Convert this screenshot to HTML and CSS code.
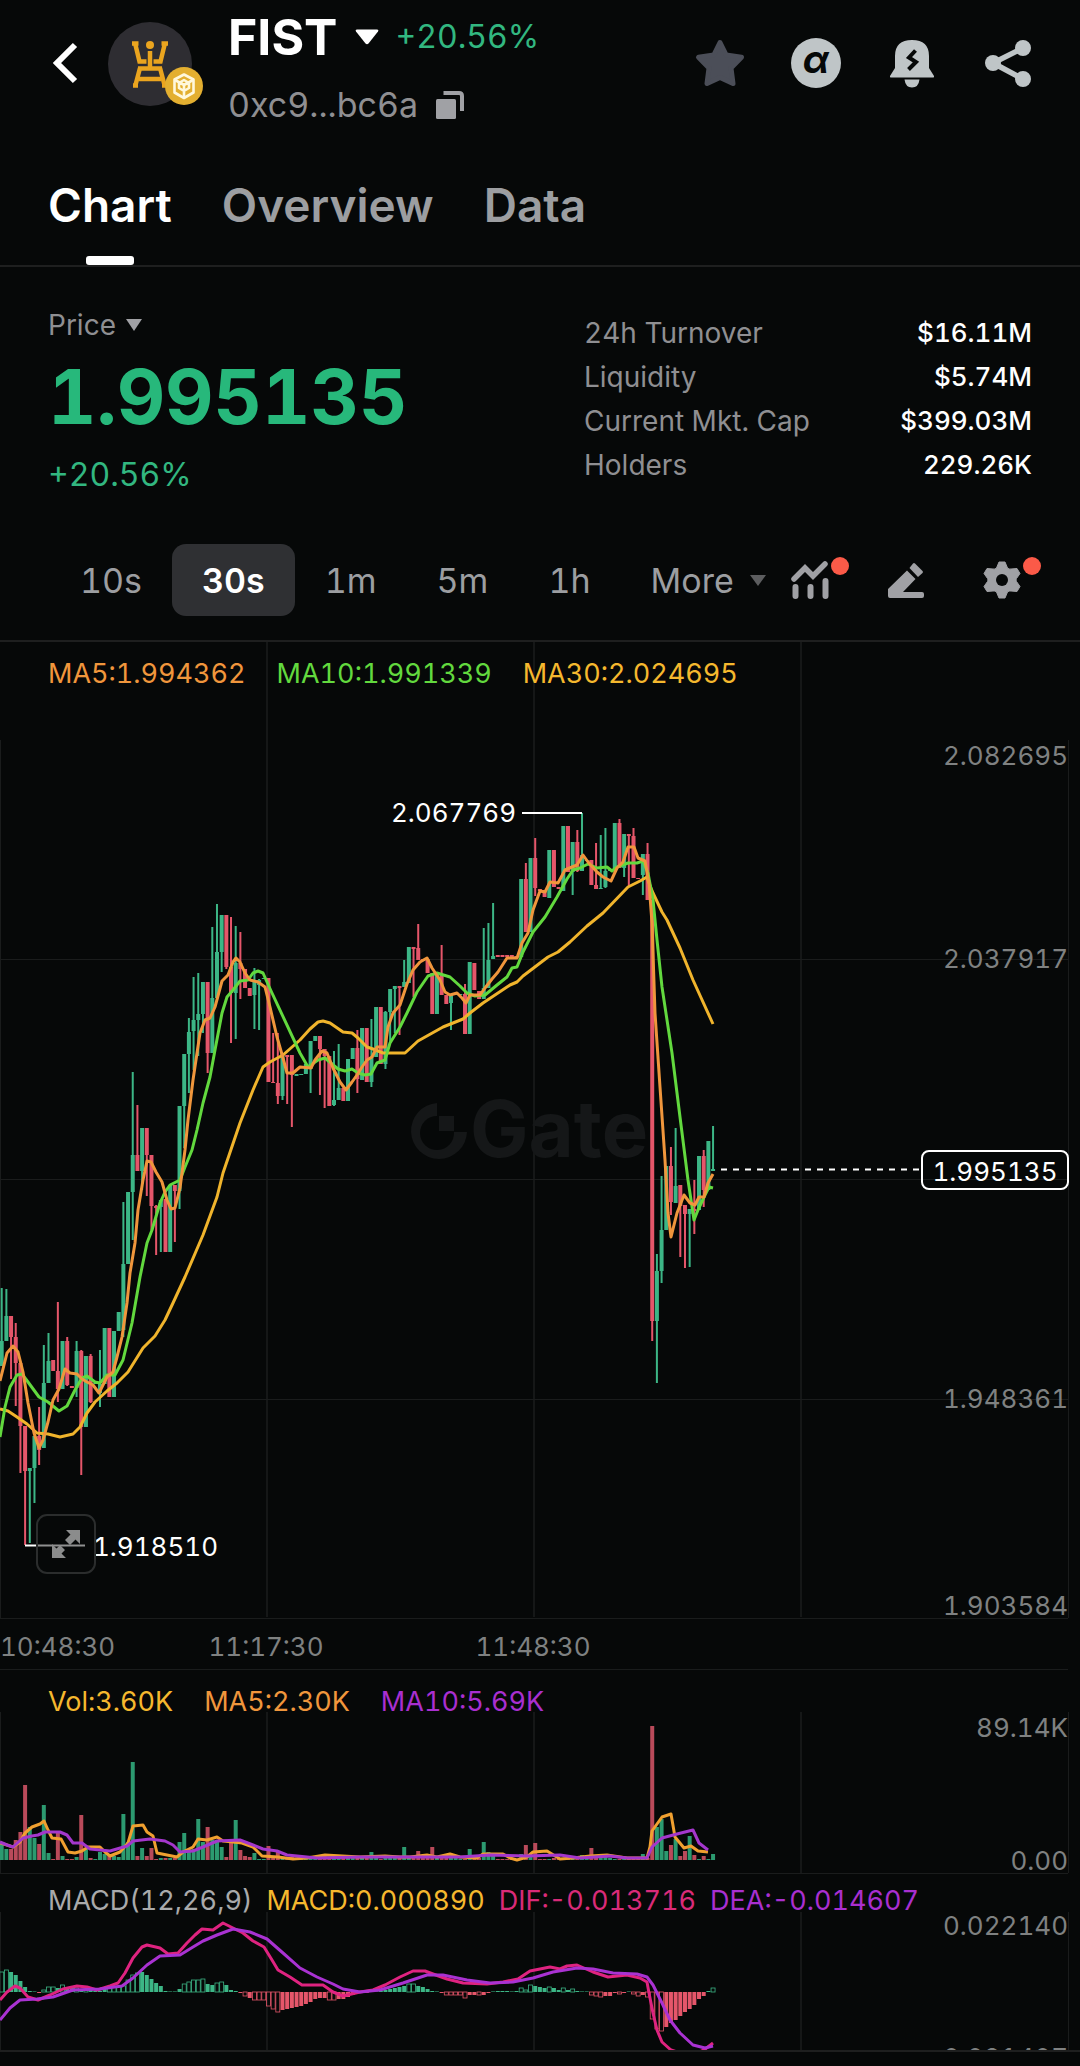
FILE: index.html
```html
<!DOCTYPE html>
<html lang="en">
<head>
    <meta charset="UTF-8">
    <meta name="viewport" content="width=device-width, initial-scale=1.0">
    <title>FIST Chart</title>
    <link rel="stylesheet" href="styles.css">
</head>
<body>
    <header class="header">
        <button class="icon-btn back" type="button" aria-label="Back">
            <svg width="30" height="42" viewBox="0 0 30 42"><path d="M27 3 L9 21 L27 39" fill="none" stroke="#fff" stroke-width="6"/></svg>
        </button>
        <div class="avatar">
            <svg width="84" height="84" viewBox="0 0 84 84">
                <circle cx="42" cy="42" r="42" fill="#2e2d32"/>
                <g fill="none" stroke="#eba51f" stroke-width="4.500">
                    <path d="M24 21.500h6.500M60 21.500h-6.500"/>
                    <path d="M27 21l4.500 18.500h7M57 21l-4.500 18.500h-7"/>
                    <path d="M42 29v18"/>
                    <path d="M30 46.500h24M32 46l-4.500 17M52 46l4.500 17M31 57h22M25 63.500h5M54 63.500h5"/>
                </g>
                <circle cx="42" cy="23" r="4" fill="#eba51f"/>
            </svg>
            <svg class="chain" width="38" height="38" viewBox="0 0 38 38">
                <circle cx="19" cy="19" r="19" fill="#e3af30"/>
                <g fill="none" stroke="#fff8dc" stroke-width="2.600" stroke-linejoin="round">
                    <path d="M9.500 12.500L19 7.500l9.500 5v13L19 31l-9.500-5.500z"/>
                    <path d="M10 13l9 5 9-5M14 21v-5l5-3 5 3v5l-5 3zM19 18v12"/>
                </g>
            </svg>
        </div>
        <div class="title">
            <div class="title-row">
                <h1>FIST</h1>
                <svg width="24" height="16" viewBox="0 0 24 16"><path d="M2 0.500h20q2 0 1 2L13.500 14.500q-1.500 1.500-3 0L1 2.500Q0 0.500 2 0.500z" fill="#fff"/></svg>
                <span class="change">+20.56%</span>
            </div>
            <div class="address-row">
                <span>0xc9...bc6a</span>
                <button class="icon-btn" type="button" aria-label="Copy address">
                    <svg width="28" height="28" viewBox="0 0 28 28"><rect x="0" y="8" width="20" height="20" rx="1.500" fill="#a0a1a5"/><path d="M7.500 2H23q3 0 3 3v15" fill="none" stroke="#a0a1a5" stroke-width="4"/></svg>
                </button>
            </div>
        </div>
        <div class="actions">
            <button class="icon-btn" type="button" aria-label="Favorite">
                <svg width="48" height="48" viewBox="0 0 48 48"><path d="M24 3.500l6.200 12.500 15.300 2.200-10.500 10.800 2 15.500L24 38.500 11 44.500l2-15.500L2.500 18.200 17.800 16z" fill="#4b4e58" stroke="#4b4e58" stroke-width="5" stroke-linejoin="round"/></svg>
            </button>
            <button class="icon-btn" type="button" aria-label="Alpha">
                <svg width="48" height="48" viewBox="0 0 48 48"><circle cx="24" cy="24" r="25" fill="#bfc5c7"/><text class="alpha" x="24" y="34" text-anchor="middle">α</text></svg>
            </button>
            <button class="icon-btn" type="button" aria-label="Price alert">
                <svg width="48" height="48" viewBox="0 0 48 48">
                    <path d="M7 17Q7 1 24 1t17 16v12l5 8q.5 1.500-1 1.500H3q-1.500 0-1-1.500l5-8zM16.500 40.500h15q-1 8-7.500 8t-7.500-8z" fill="#bfc5c7"/>
                    <path d="M27.500 11.500L21 18.500l7 4.500-7.500 7.500" fill="none" stroke="#060808" stroke-width="4"/>
                </svg>
            </button>
            <button class="icon-btn" type="button" aria-label="Share">
                <svg width="48" height="48" viewBox="0 0 48 48"><path d="M39 9L9 24l30 16" fill="none" stroke="#bfc5c7" stroke-width="5.500"/><g fill="#bfc5c7"><circle cx="39" cy="9" r="8"/><circle cx="9" cy="24" r="8"/><circle cx="39" cy="40" r="8"/></g></svg>
            </button>
        </div>
    </header>

    <nav class="tabs">
        <a class="active" href="#chart">Chart</a>
        <a href="#overview">Overview</a>
        <a href="#data">Data</a>
    </nav>

    <section class="summary">
        <div class="price">
            <button class="price-type" type="button">Price
                <svg width="16" height="12" viewBox="0 0 16 12"><path d="M0 0h16L8 12z" fill="#a0a1a5"/></svg>
            </button>
            <div class="price-value">1.995135</div>
            <div class="change">+20.56%</div>
        </div>
        <dl class="stats">
            <div><dt>24h Turnover</dt><dd>$16.11M</dd></div>
            <div><dt>Liquidity</dt><dd>$5.74M</dd></div>
            <div><dt>Current Mkt. Cap</dt><dd>$399.03M</dd></div>
            <div><dt>Holders</dt><dd>229.26K</dd></div>
        </dl>
    </section>

    <div class="toolbar">
        <div class="intervals">
            <button type="button">10s</button>
            <button class="active" type="button">30s</button>
            <button type="button">1m</button>
            <button type="button">5m</button>
            <button type="button">1h</button>
            <button class="more" type="button">More
                <svg width="16" height="11" viewBox="0 0 16 11"><path d="M0 0h16L8 11z" fill="#5c5d5f"/></svg>
            </button>
        </div>
        <div class="tools">
            <button class="icon-btn dot" type="button" aria-label="Indicators">
                <svg width="38" height="38" viewBox="0 0 38 38"><path d="M3 18L14 7l8 8L34 3" fill="none" stroke="#a0a1a5" stroke-width="5.500" stroke-linecap="round"/><path d="M4.500 26v9M19.500 26v9M34.500 20v15" stroke="#a0a1a5" stroke-width="6" stroke-linecap="round"/></svg>
            </button>
            <button class="icon-btn" type="button" aria-label="Draw">
                <svg width="38" height="38" viewBox="0 0 38 38"><g fill="#a0a1a5"><path d="M20 9.500l8.500 8.500L16 31h19q2 0 2 2v2q0 2-2 2H3q-2 0-2-2v-7z"/><path d="M22.500 7L26 2.500q1-1 2 0l7.500 7.500q1 1 0 2L31 16z"/></g></svg>
            </button>
            <button class="icon-btn dot" type="button" aria-label="Settings">
                <svg width="38" height="38" viewBox="0 0 38 38"><path d="M16 1h6l2.500 6q1.500 1.500 3.500 1l6-.5 3 5-3.500 5q-1 1.500 0 3l3.500 5-3 5-6-.5q-2-.5-3.500 1L22 37h-6l-2.500-6q-1.500-1.500-3.500-1l-6 .5-3-5 3.500-5q1-1.500 0-3L1 12.500l3-5 6 .5q2 .5 3.500-1z" fill="#a0a1a5" stroke="#a0a1a5" stroke-linejoin="round"/><circle cx="19" cy="19" r="6" fill="#060808"/></svg>
            </button>
        </div>
    </div>

    <main class="chart" id="chart">
        <div class="pane">
            <div class="legend wide">
                <span class="orange">MA5:1.994362</span>
                <span class="green">MA10:1.991339</span>
                <span class="yellow">MA30:2.024695</span>
            </div>
            <svg id="price-pane" viewBox="0 642 1080 1028">
                <path class="grid-bold" d="M267 642V1617M534 642V1617M801 642V1617"/>
                <path class="grid" d="M.5 740V1618M1068.500 740V1618M0 959.500H1068M0 1179.500H1068M0 1399.500H1068M0 1618.500H1068M0 1669.500H1068"/>
                <!-- watermark -->
                <g class="watermark">
                    <path d="M437 1103A28 28 0 1 0 467 1132H454A17 17 0 1 1 437 1116z"/>
                    <path d="M439 1116h15v15h-15z"/>
                    <text x="470" y="1157">Gate</text>
                </g>
                <g class="candles"></g>
                <g class="lines"></g>
                <g class="axis">
                    <text x="1068" y="765" text-anchor="end">2.082695</text>
                    <text x="1068" y="968" text-anchor="end">2.037917</text>
                    <text x="1068" y="1408" text-anchor="end">1.948361</text>
                    <text x="1068" y="1615" text-anchor="end">1.903584</text>
                    <text x="0" y="1656">10:48:30</text>
                    <text x="266" y="1656" text-anchor="middle">11:17:30</text>
                    <text x="533" y="1656" text-anchor="middle">11:48:30</text>
                </g>
                <!-- high / low marks -->
                <g class="marks">
                    <path d="M522 813H582M25 1545.500H85"/>
                    <path d="M721 1169.500H921" stroke-dasharray="6 6"/>
                    <rect x="922" y="1151" width="146" height="38" rx="7"/>
                    <text x="516" y="822" text-anchor="end">2.067769</text>
                    <text x="93" y="1556">1.918510</text>
                    <text x="995" y="1181" text-anchor="middle">1.995135</text>
                </g>
            </svg>
            <button class="expand" type="button" aria-label="Full screen">
                <svg width="28" height="28" viewBox="0 0 28 28"><path d="M14 0h14v14l-4.500-4.500L18 15l-5-5 5.500-5.500zM14 28H0V14l4.500 4.500L8 15l5 5-3.500 3.500z" fill="#8b8c8c"/></svg>
            </button>
        </div>
        <div class="pane">
            <div class="legend wide">
                <span class="yellow">Vol:3.60K</span>
                <span class="orange">MA5:2.30K</span>
                <span class="purple">MA10:5.69K</span>
            </div>
            <svg id="volume-pane" viewBox="0 1670 1080 204">
                <path class="grid-bold" d="M267 1712V1873M534 1712V1873M801 1712V1873"/>
                <path class="grid" d="M.5 1712V1873M1068.500 1712V1873M0 1873.500H1068"/>
                <g class="bars"></g>
                <g class="lines"></g>
                <g class="axis">
                    <text x="1068" y="1737" text-anchor="end">89.14K</text>
                    <text x="1068" y="1870" text-anchor="end">0.00</text>
                </g>
            </svg>
        </div>
        <div class="pane last">
            <div class="legend">
                <span class="gray">MACD(12,26,9)</span>
                <span class="yellow">MACD:0.000890</span>
                <span class="pink">DIF:-0.013716</span>
                <span class="purple">DEA:-0.014607</span>
            </div>
            <svg id="macd-pane" viewBox="0 1874 1080 176">
                <path class="grid-bold" d="M267 1912V2050M534 1912V2050M801 1912V2050"/>
                <path class="grid" d="M.5 1912V2050M1068.500 1912V2050"/>
                <g class="bars"></g>
                <g class="lines"></g>
                <g class="axis">
                    <text x="1068" y="1935" text-anchor="end">0.022140</text>
                    <text x="1068" y="2067" text-anchor="end">-0.021407</text>
                </g>
            </svg>
        </div>
    </main>
    <script src="chart.js"></script>
</body>
</html>
```

FILE: styles.css
```css
* {
    box-sizing: border-box;
}

body {
    margin: 0;
    background-color: #060808;
    color: #fff;
    font-family: Inter, "Liberation Sans", sans-serif;
    font-size: 28px;
    font-variant-numeric: tabular-nums;
}

button {
    margin: 0;
    padding: 0;
    border: 0;
    background: none;
    color: inherit;
    font: inherit;
    font-variant-numeric: inherit;
}

svg {
    display: block;
    overflow: visible;
}

.icon-btn {
    position: relative;
    flex: none;
}

/* header */
.header {
    display: flex;
    align-items: center;
    height: 126px;
    padding: 0 48px;
}

.avatar {
    position: relative;
    margin: 2px 36px 0 30px;
}

.chain {
    position: absolute;
    right: -11px;
    bottom: 1px;
}

.title {
    padding-top: 6px;
}

.title-row {
    display: flex;
    align-items: center;
    gap: 17px;
    height: 60px;
    margin-bottom: 18px;
}

.title-row h1 {
    margin: 0;
    font-size: 50px;
    font-weight: 700;
}

.change {
    color: #32b780;
    font-size: 32px;
    line-height: 40px;
}

.address-row {
    display: flex;
    align-items: center;
    gap: 18px;
    color: #8f8f92;
    font-size: 34px;
    line-height: 40px;
}

.actions {
    display: flex;
    gap: 48px;
    margin-left: auto;
}

.alpha {
    fill: #060808;
    font-size: 38px;
    font-style: italic;
    font-weight: 700;
}

/* tabs */
.tabs {
    display: flex;
    gap: 50px;
    padding: 51px 48px 0;
    border-bottom: 2px solid #1e1f1f;
}

.tabs a {
    position: relative;
    padding-bottom: 32px;
    color: #9c9ea1;
    font-size: 46px;
    font-weight: 600;
    line-height: 56px;
    text-decoration: none;
}

.tabs .active {
    color: #fff;
}

.tabs .active::after {
    content: "";
    position: absolute;
    bottom: 0;
    left: 50%;
    width: 48px;
    height: 9px;
    margin-left: -24px;
    border-radius: 3px;
    background-color: #fff;
}

/* price + stats */
.summary {
    display: flex;
    justify-content: space-between;
    padding: 41px 48px 0;
}

.price-type {
    display: flex;
    align-items: center;
    gap: 10px;
    color: #8f8f92;
    line-height: 34px;
}

.price-value {
    margin: 9px 0 12px;
    color: #27b87b;
    font-size: 75px;
    font-weight: 700;
    line-height: 92px;
}

.stats {
    width: 448px;
    margin: 3px 0 0;
    line-height: 44px;
}

.stats div {
    display: flex;
    justify-content: space-between;
}

.stats dt {
    color: #8f8f92;
}

.stats dd {
    margin: 0;
    font-size: 26px;
    font-weight: 500;
}

/* interval toolbar */
.toolbar {
    display: flex;
    align-items: center;
    justify-content: space-between;
    padding: 49px 59px 24px 50px;
    border-bottom: 2px solid #1e1f1f;
}

.intervals {
    display: flex;
}

.intervals button {
    height: 72px;
    padding: 0 30px;
    border-radius: 14px;
    color: #9c9ea1;
    font-size: 34px;
}

.intervals .active {
    background-color: #2f3033;
    color: #fff;
    font-weight: 600;
}

.intervals .more {
    display: flex;
    align-items: center;
    gap: 16px;
    padding-right: 0;
}

.tools {
    display: flex;
    gap: 58px;
}

.dot::after {
    content: "";
    position: absolute;
    top: -4px;
    right: -20px;
    width: 18px;
    height: 18px;
    border-radius: 50%;
    background-color: #fb5a48;
}

/* chart */
.pane {
    position: relative;
}

.pane > svg {
    width: 100%;
    height: auto;
}

.pane.last {
    border-bottom: 2px solid #1e1f1f;
}

.pane.last > svg {
    overflow: hidden;
}

.legend {
    position: absolute;
    top: 14px;
    left: 48px;
    display: flex;
    gap: 14px;
    font-size: 27px;
    line-height: 36px;
}

.legend.wide {
    gap: 31px;
}

.last .legend {
    top: 9px;
}

.orange {
    color: #f0963c;
}

.green {
    color: #62d93e;
}

.yellow {
    color: #f5b82e;
}

.purple {
    color: #a92fd0;
}

.pink {
    color: #d92b78;
}

.gray {
    color: #a9aaab;
}

.grid,
.grid-bold {
    fill: none;
    stroke: #1a1c1c;
}

.grid-bold {
    stroke: #151717;
    stroke-width: 2;
}

.watermark {
    fill: #151718;
}

.watermark text {
    font-size: 78px;
    font-weight: 700;
}

.axis,
.marks {
    font-size: 26px;
}

.axis {
    fill: #7f8181;
}

.marks {
    fill: #fff;
}

.marks path,
.marks rect {
    fill: none;
    stroke: #fff;
    stroke-width: 2;
}

.lines polyline {
    fill: none;
    stroke-width: 3;
    stroke-linejoin: round;
}

.expand {
    position: absolute;
    bottom: 96px;
    left: 36px;
    width: 60px;
    height: 60px;
    padding: 14px;
    border: 2px solid #2b2d2d;
    border-radius: 11px;
    background-color: rgba(6, 8, 8, 0.45);
}
```

FILE: chart.js
```js
const STEP = 4.68;
const START = 1.7;
const UP = '#3cb686';
const DOWN = '#e5566a';

// [1 = up / 0 = down, high, low, body top, body bottom]
const candles = [
    [1,1288,1366,1341,1366],[1,1289,1341,1316,1341],[0,1316,1379,1316,1337],[0,1323,1406,1337,1363],
    [0,1363,1473,1363,1426],[0,1426,1545,1426,1471],[1,1468,1543,1468,1471],[1,1436,1503,1436,1468],
    [0,1407,1465,1436,1450],[1,1345,1448,1383,1448],[1,1333,1383,1361,1383],[0,1360,1371,1360,1371],
    [0,1302,1402,1371,1389],[1,1341,1389,1341,1389],[0,1337,1386,1341,1385],[0,1386,1388,1386,1388],
    [1,1341,1397,1351,1388],[0,1350,1475,1351,1427],[1,1356,1427,1356,1427],[0,1354,1403,1356,1402],
    [1,1383,1384,1383,1384],[1,1350,1407,1384,1393],[1,1328,1384,1328,1384],[0,1328,1397,1328,1397],
    [1,1331,1397,1331,1397],[1,1312,1331,1312,1331],[1,1202,1337,1264,1330],[1,1192,1264,1192,1264],
    [1,1072,1240,1155,1192],[0,1105,1171,1155,1171],[1,1128,1190,1128,1171],[0,1128,1196,1128,1155],
    [0,1155,1230,1155,1206],[0,1205,1255,1206,1208],[1,1200,1252,1200,1207],[0,1199,1252,1199,1252],
    [1,1185,1252,1185,1252],[0,1185,1242,1185,1191],[1,1106,1209,1106,1191],[1,1054,1148,1054,1106],
    [1,1018,1093,1032,1054],[1,977,1070,1020,1031],[1,973,1056,1014,1020],[1,982,1033,982,1014],
    [0,982,1073,982,1053],[1,927,1053,998,1053],[1,904,998,952,998],[1,915,972,915,952],
    [0,915,969,915,967],[0,917,1043,967,993],[1,926,1039,963,993],[0,932,999,963,969],
    [0,969,988,969,988],[0,988,996,988,996],[1,968,1029,980,995],[1,979,1030,980,985],
    [1,978,979,978,979],[0,978,1082,978,1082],[0,1033,1083,1082,1083],[0,1033,1104,1083,1096],
    [1,1053,1100,1053,1096],[0,1055,1104,1055,1057],[0,1055,1127,1055,1075],[1,1074,1076,1074,1076],
    [1,1074,1075,1074,1075],[1,1064,1074,1064,1074],[1,1041,1093,1041,1069],[1,1036,1041,1036,1041],
    [0,1036,1095,1036,1049],[0,1049,1108,1049,1056],[0,1056,1106,1056,1106],[1,1051,1106,1100,1105],
    [1,1044,1100,1088,1100],[0,1088,1101,1088,1101],[1,1059,1101,1059,1101],[1,1048,1059,1048,1059],
    [0,1030,1093,1048,1079],[1,1028,1080,1028,1080],[0,1028,1082,1028,1082],[1,1019,1087,1057,1082],
    [1,1007,1057,1007,1057],[0,1007,1064,1007,1064],[1,1011,1069,1012,1064],[1,989,1043,989,1012],
    [1,986,1033,986,989],[0,986,1035,986,988],[1,960,987,982,987],[1,947,983,947,983],
    [0,947,997,947,949],[0,924,960,948,960],[0,959,961,959,961],[0,959,973,959,973],
    [0,973,1014,973,1014],[1,975,1014,975,1014],[0,945,995,975,995],[0,995,1004,995,1004],
    [1,994,1030,994,1003],[1,994,995,994,995],[1,994,995,994,995],[0,984,1034,994,1034],
    [1,962,1034,962,1034],[0,963,990,963,990],[0,991,999,991,999],[1,928,999,988,999],
    [1,923,988,960,988],[1,903,959,956,959],[0,955,957,955,957],[0,955,957,955,957],
    [0,955,957,955,957],[0,955,957,955,957],[0,956,958,956,958],[1,879,957,879,957],
    [0,863,932,879,932],[1,858,932,858,932],[0,838,896,858,888],[0,889,891,889,891],
    [0,890,897,890,897],[1,850,898,850,898],[0,850,887,850,887],[0,887,889,887,889],
    [1,826,891,826,891],[0,826,872,826,872],[1,842,895,842,872],[0,830,872,842,871],
    [1,813,871,855,871],[1,860,861,860,861],[0,860,885,860,885],[0,843,889,885,889],
    [1,835,889,888,889],[1,828,888,871,887],[1,869,871,869,871],[1,823,871,823,871],
    [0,819,868,823,868],[1,834,877,834,868],[0,834,887,834,836],[0,828,878,836,878],
    [0,878,879,878,879],[1,854,895,854,875],[0,843,900,854,900],[0,900,1341,900,1321],
    [1,1254,1383,1271,1321],[1,1176,1283,1230,1271],[1,1166,1230,1166,1230],[0,1147,1215,1166,1202],
    [1,1128,1203,1186,1203],[0,1185,1257,1185,1206],[0,1205,1268,1205,1214],[1,1209,1267,1209,1214],
    [0,1180,1234,1209,1211],[1,1156,1210,1156,1210],[0,1150,1207,1156,1190],[1,1141,1190,1141,1190],
    [1,1126,1171,1169,1171]
];

const volumes = [
    17,11,11,20,28,75,33,22,16,55,7,1,27,4,1,1,3,45,12,2,1,8,6,6,4,3,46,18,98,4,12,4,12,1,2,2,2,2,18,27,
    8,11,41,18,33,20,18,13,3,17,40,10,4,3,7,1,1,14,3,8,1,1,3,1,2,1,2,1,3,6,2,4,4,3,3,2,4,3,2,8,
    2,1,5,4,4,2,13,4,2,9,2,2,13,2,5,5,6,2,1,1,11,1,2,18,8,4,1,1,1,1,1,6,15,4,17,1,1,1,2,1,
    2,3,2,1,5,4,12,4,5,5,2,1,1,2,1,2,3,6,2,134,33,41,9,15,21,4,9,24,5,1,4,1,6
];

// histogram heights, a trailing "h" is a hollow bar
const macd = ('20h 22h 20 17 11 5 1 0 -1 2h 5h 5h 4 7h 5 4 4h 3 3h 2 1 1 4 4h 5h 5h 6h 12h 17h 19h 20 17 13 9 6 1 0 0 3 8h ' +
    '10h 12h 12h 13h 8 7 9h 10h 7 2 1 -1 -4h -6 -8h -8h -8h -14h -17h -20h -18 -17 -16 -15 -14 -12 -10 -7 -6 -6 -8h -8h -7 -7 -5 -3 -1 -1 -1 0 ' +
    '0 1 2 3 4 5 6 8h 8h 6 5 3 1 0 -1 -3h -3h -3h -3h -6h -3 -3 -3h -3 -1 0 1 1 1 0 1 4h 2h 7h 6 5 4 5h 4 2 ' +
    '4h 2 3h 1 0 0 -3h -4h -5h -4 -4 -1 -2h -1 0 -2h -4h -3 -5h -27h -37h -39h -35 -31 -28 -24 -20 -17 -13 -7 -4 1 4h').split(' ');

const ma5 = '0,1381 7,1353 13,1346 18,1352 23,1372 28,1403 34,1433 39,1448 43,1440 48,1422 53,1400 59,1389 65,1369 70,1373 77,1374 82,1379 87,1382 93,1385 99,1393 107,1377 113,1372 117,1357 122,1337 127,1303 130,1273 135,1243 138,1210 143,1180 147,1161 151,1162 156,1172 162,1182 167,1200 171,1209 175,1208 180,1188 185,1150 188,1120 193,1080 200,1033 205,1020 210,1018 215,1007 222,981 228,975 233,962 236,958 240,962 245,973 250,980 258,982 265,987 270,1007 277,1037 283,1058 287,1073 293,1073 300,1067 311,1068 315,1060 322,1051 327,1053 333,1068 340,1082 346,1090 352,1082 357,1075 362,1067 367,1060 372,1057 377,1047 385,1047 388,1027 393,1013 400,1005 407,984 413,970 420,962 427,958 432,968 440,980 445,992 450,995 457,993 462,998 466,1003 470,995 480,995 485,988 492,979 498,972 507,958 517,958 522,943 528,933 533,910 540,891 545,892 550,882 558,883 565,870 572,867 577,865 583,855 588,862 597,872 603,877 611,881 617,868 623,862 628,847 634,847 638,858 645,861 649,883 652,923 655,1013 660,1087 665,1160 668,1213 671,1237 677,1213 684,1195 690,1203 695,1205 699,1197 704,1197 708,1183 713,1174';
const ma10 = '0,1437 5,1407 10,1387 17,1375 22,1374 28,1382 39,1397 48,1402 59,1411 67,1406 75,1390 82,1378 87,1376 95,1382 100,1383 107,1375 115,1375 123,1360 132,1323 140,1277 147,1243 152,1230 160,1203 165,1192 170,1185 180,1180 185,1167 192,1150 197,1130 203,1103 210,1077 215,1050 222,1013 227,997 233,990 240,981 248,980 253,973 258,971 263,973 267,982 272,993 300,1053 308,1067 318,1060 325,1058 332,1064 338,1069 345,1071 352,1069 358,1073 365,1075 371,1074 377,1063 385,1060 390,1043 400,1027 407,1013 417,992 428,976 437,973 450,977 460,986 467,993 475,996 485,995 497,985 507,977 512,968 517,967 523,952 533,932 545,917 557,897 567,879 573,870 580,868 588,864 597,868 607,867 612,871 617,867 628,863 637,863 643,861 648,873 653,900 657,940 662,987 672,1053 680,1117 688,1180 694,1220 698,1210 705,1195 709,1187 713,1188';
const ma30 = '0,1409 8,1411 17,1417 27,1424 37,1433 48,1434 60,1437 73,1434 80,1427 87,1413 95,1402 107,1391 117,1383 128,1372 143,1348 155,1336 165,1320 173,1303 185,1277 203,1235 217,1197 223,1173 240,1123 253,1090 263,1067 270,1062 283,1055 300,1040 310,1029 318,1022 323,1021 330,1023 343,1032 352,1033 358,1038 367,1047 373,1049 383,1053 405,1053 418,1041 443,1027 463,1019 470,1013 483,1003 510,985 517,982 523,976 548,957 558,952 570,942 587,926 603,913 628,887 640,881 647,877 649,883 653,893 662,912 667,920 680,948 693,980 713,1024';

const volMa5 = '0,1843 7,1845 13,1847 20,1842 25,1833 32,1827 40,1824 44,1821 48,1830 52,1838 61,1839 68,1852 75,1853 82,1851 88,1847 100,1847 105,1852 110,1856 120,1852 128,1843 133,1826 143,1825 147,1832 153,1836 157,1853 167,1855 177,1857 183,1852 193,1847 198,1839 207,1840 217,1837 223,1841 233,1842 242,1843 253,1847 262,1856 278,1857 293,1859 307,1858 325,1855 360,1857 385,1856 400,1857 410,1857 427,1855 437,1857 450,1854 460,1857 477,1858 483,1854 503,1854 510,1858 517,1860 527,1857 533,1852 547,1851 560,1859 573,1858 590,1856 607,1855 627,1858 647,1858 650,1847 652,1831 662,1817 671,1814 675,1837 684,1848 691,1846 698,1851 708,1852';
const volMa10 = '0,1842 7,1845 13,1847 23,1838 32,1836 38,1835 45,1832 60,1832 67,1835 73,1843 82,1843 90,1849 110,1851 127,1846 133,1841 150,1839 165,1841 173,1845 180,1852 193,1851 203,1847 217,1841 240,1840 253,1845 263,1849 277,1851 287,1855 317,1858 360,1857 427,1857 460,1857 490,1855 527,1856 560,1855 580,1858 610,1856 627,1858 647,1858 652,1847 662,1838 677,1834 693,1830 699,1843 708,1850';

const dif = '0,2000 7,1992 15,1986 20,1988 28,1997 38,2000 50,1995 63,1989 77,1986 87,1987 97,1990 110,1986 118,1983 125,1973 133,1958 142,1947 147,1945 160,1948 168,1954 178,1953 187,1943 195,1935 202,1929 213,1930 223,1923 233,1928 243,1933 253,1941 264,1947 272,1960 278,1970 290,1977 302,1985 323,1985 333,1992 343,1996 360,1992 373,1990 385,1985 400,1977 413,1971 425,1971 433,1974 447,1979 463,1983 487,1984 503,1982 518,1979 530,1971 550,1967 560,1969 567,1966 577,1965 593,1972 608,1977 627,1975 640,1978 647,1982 649,1993 653,2013 657,2030 662,2042 671,2050 690,2056 704,2050 713,2043';
const dea = '0,2020 10,2008 20,2000 37,1999 53,1997 73,1990 100,1989 122,1986 133,1978 147,1965 160,1956 180,1955 193,1947 203,1941 217,1935 233,1929 250,1932 267,1939 283,1953 300,1968 317,1977 333,1984 343,1989 360,1992 380,1990 403,1983 427,1975 443,1975 467,1980 490,1983 513,1982 533,1978 553,1972 577,1968 593,1969 613,1973 637,1974 647,1977 653,1985 662,2003 670,2020 680,2033 693,2045 705,2048 713,2046';

function add(parent, name, attrs) {
    const el = document.createElementNS('http://www.w3.org/2000/svg', name);
    for (const key in attrs) {
        el.setAttribute(key, attrs[key]);
    }
    parent.appendChild(el);
}

function drawLine(pane, points, color) {
    add(document.querySelector(pane + ' .lines'), 'polyline', { points: points, stroke: color });
}

const candleGroup = document.querySelector('#price-pane .candles');
const volumeGroup = document.querySelector('#volume-pane .bars');
const macdGroup = document.querySelector('#macd-pane .bars');

candles.forEach(([up, high, low, top, bottom], i) => {
    const x = START + i * STEP;
    const fill = up ? UP : DOWN;
    add(candleGroup, 'rect', { x: x - 1, y: high, width: 2, height: low - high, fill });
    add(candleGroup, 'rect', { x: x - 2, y: top, width: 4, height: bottom - top, fill });
    add(volumeGroup, 'rect', { x: x - 2, y: 1860 - volumes[i], width: 4, height: volumes[i], fill: up ? '#2c9a70' : '#b94a5a' });
});

// zero line at y = 1992
macd.forEach((item, i) => {
    const value = parseInt(item);
    const hollow = item.endsWith('h');
    const color = value < 0 ? DOWN : UP;
    const x = START + i * STEP;
    const height = Math.max(Math.abs(value), 0.5);
    const y = value < 0 ? 1992 : 1992 - height;
    if (hollow) {
        add(macdGroup, 'rect', { x: x - 2, y: y, width: 4, height: height, fill: 'none', stroke: color, 'stroke-width': 0.8 });
    } else {
        add(macdGroup, 'rect', { x: x - 2, y: y, width: 4, height: height, fill: color });
    }
});

drawLine('#price-pane', ma30, '#f0b42c');
drawLine('#price-pane', ma10, '#62d93e');
drawLine('#price-pane', ma5, '#f0963c');
drawLine('#volume-pane', volMa5, '#f0a030');
drawLine('#volume-pane', volMa10, '#a437cc');
drawLine('#macd-pane', dif, '#df2380');
drawLine('#macd-pane', dea, '#a932d2');
```
